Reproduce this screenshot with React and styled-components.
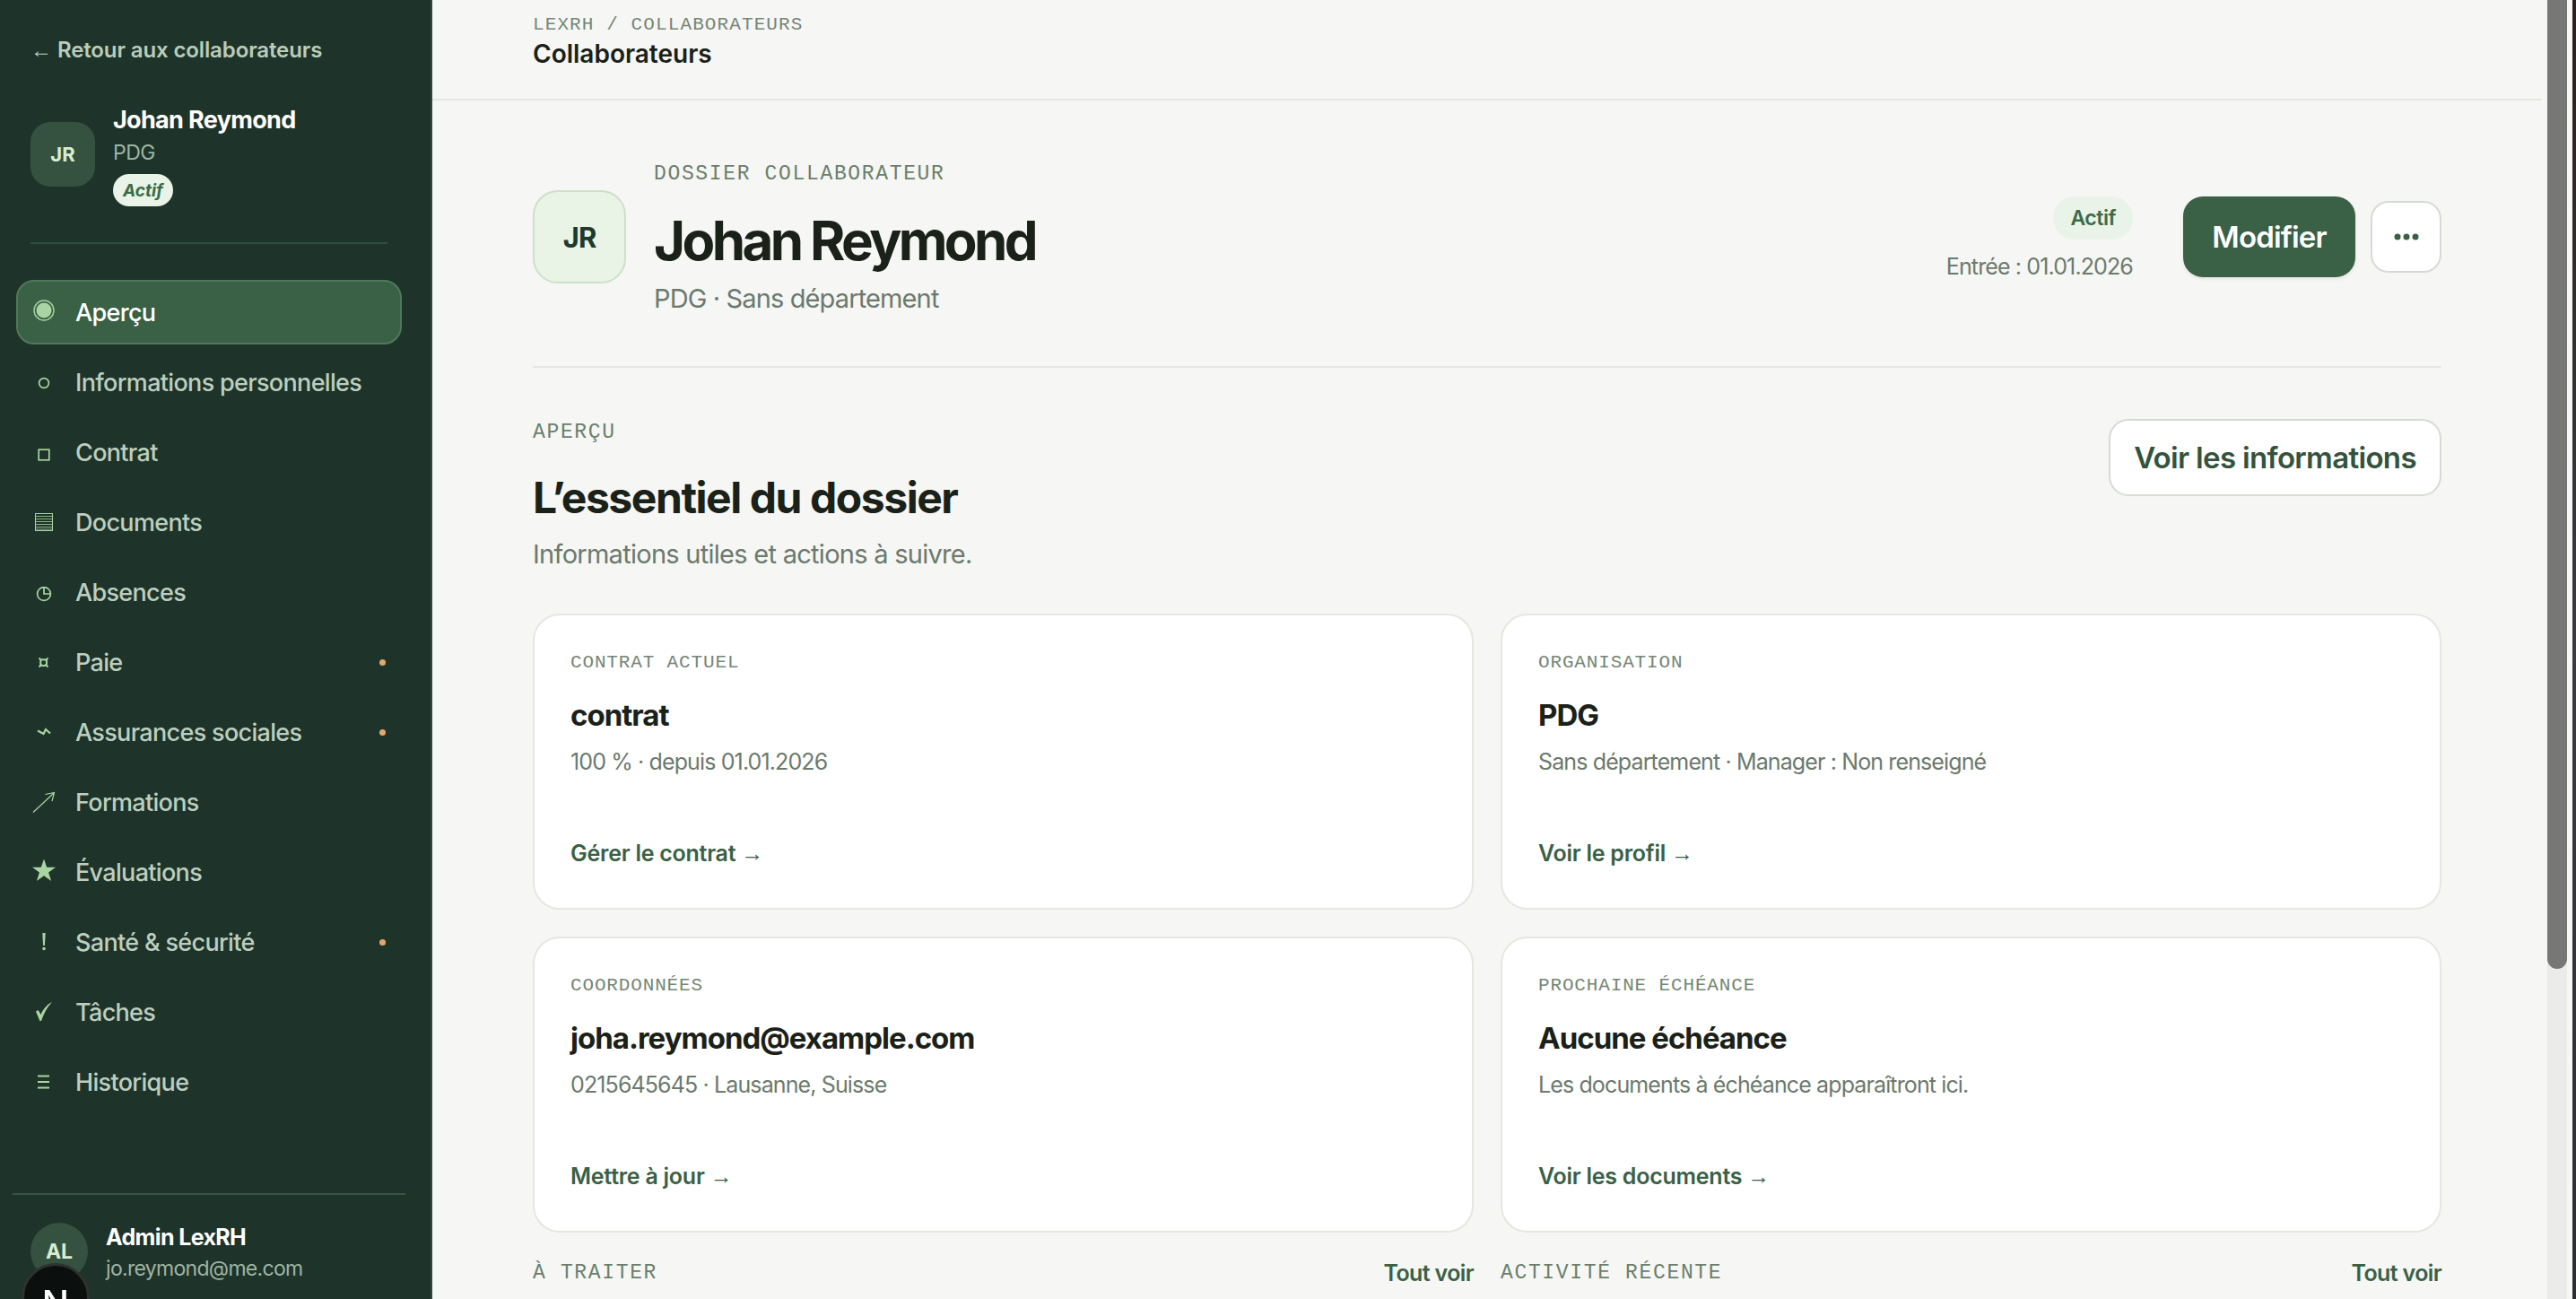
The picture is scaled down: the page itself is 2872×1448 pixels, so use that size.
import React from 'react'
import styled, { createGlobalStyle } from 'styled-components'

const SANS = '"Inter", "Noto Sans", sans-serif'
const MONO = '"Liberation Mono", "DejaVu Sans Mono", monospace'

const ICON = '#a8d5a2'

const GlobalStyle = createGlobalStyle`
  * {
    box-sizing: border-box;
  }
  html,
  body {
    margin: 0;
    height: 100%;
    overflow: hidden;
    background: #f6f6f4;
    font-family: ${SANS};
  }
`

const icons = {
  dot: (
    <>
      <circle cx="16" cy="14" r="11" fill="none" stroke={ICON} strokeWidth="1.4" />
      <circle cx="16" cy="14" r="8.5" fill={ICON} />
    </>
  ),
  circle: <circle cx="16" cy="17" r="5.4" fill="none" stroke={ICON} strokeWidth="1.7" />,
  square: <rect x="10.2" y="13.2" width="11.6" height="11.6" fill="none" stroke={ICON} strokeWidth="1.7" />,
  lines: (
    <>
      <rect x="6.5" y="6.5" width="19" height="19" fill="none" stroke={ICON} strokeWidth="1" />
      <path d="M6 9.500h20M6 12.500h20M6 15.500h20M6 18.500h20M6 21.500h20M6 24h20" stroke={ICON} strokeWidth="1.200" opacity="0.8" />
    </>
  ),
  clock: (
    <>
      <circle cx="16" cy="18" r="7.4" fill="none" stroke={ICON} strokeWidth="1.7" />
      <path d="M16 11v7h7.4" fill="none" stroke={ICON} strokeWidth="1.7" />
    </>
  ),
  currency: (
    <>
      <rect x="12.2" y="13.2" width="6.8" height="6.8" rx="2.4" fill="none" stroke={ICON} strokeWidth="2" />
      <path d="M10.500 11.500l3 3M20.500 11.500l-3 3M10.500 21.500l3-3M20.500 21.500l-3-3" stroke={ICON} strokeWidth="2" />
    </>
  ),
  bolt: <path d="M9 14.500l6.500 3.500 2.500-5 5 4.500" fill="none" stroke={ICON} strokeWidth="2.200" />,
  arrow: <path d="M4 27.500L27 6M17.500 7.500L27.500 5.500L25 15" fill="none" stroke={ICON} strokeWidth="1.200" />,
  star: <path d="M16 1.500l3.200 9.300h9.800l-7.900 5.800 3 9.400-8.100-5.800-8.100 5.800 3-9.400-7.900-5.800h9.800z" fill={ICON} />,
  alert: (
    <>
      <path d="M14.300 6h3.400l-.8 14h-1.800z" fill={ICON} />
      <circle cx="16" cy="23.500" r="1.800" fill={ICON} />
    </>
  ),
  check: <path d="M7 15.500l2.600-1.600 3 5.200C15 13 19 8 25 5c-5 5-9 12-12 21h-1.600z" fill={ICON} />,
  menu: <path d="M9 9.500h13M9 16h13M9 22.500h13" stroke={ICON} strokeWidth="2" />,
}

const navItems = [
  { label: 'Aperçu', icon: 'dot', active: true },
  { label: 'Informations personnelles', icon: 'circle' },
  { label: 'Contrat', icon: 'square' },
  { label: 'Documents', icon: 'lines' },
  { label: 'Absences', icon: 'clock' },
  { label: 'Paie', icon: 'currency', alert: true },
  { label: 'Assurances sociales', icon: 'bolt', alert: true },
  { label: 'Formations', icon: 'arrow' },
  { label: 'Évaluations', icon: 'star' },
  { label: 'Santé & sécurité', icon: 'alert', alert: true },
  { label: 'Tâches', icon: 'check' },
  { label: 'Historique', icon: 'menu' },
]

const cards = [
  { label: 'CONTRAT ACTUEL', title: 'contrat', text: '100 % · depuis 01.01.2026', link: 'Gérer le contrat' },
  { label: 'ORGANISATION', title: 'PDG', text: 'Sans département · Manager : Non renseigné', link: 'Voir le profil' },
  { label: 'COORDONNÉES', title: 'joha.reymond@example.com', text: '0215645645 · Lausanne, Suisse', link: 'Mettre à jour' },
  {
    label: 'PROCHAINE ÉCHÉANCE',
    title: 'Aucune échéance',
    text: 'Les documents à échéance apparaîtront ici.',
    link: 'Voir les documents',
  },
]

const App = () => {
  return (
    <Page>
      <GlobalStyle />
      <Sidebar>
        <BackLink>
          <Arrow>←</Arrow> Retour aux collaborateurs
        </BackLink>
        <Profile>
          <ProfileAvatar>JR</ProfileAvatar>
          <div>
            <ProfileName>Johan Reymond</ProfileName>
            <ProfileRole>PDG</ProfileRole>
            <ProfileBadge>Actif</ProfileBadge>
          </div>
        </Profile>
        <Nav>
          {navItems.map((item) => (
            <NavItem key={item.label} $active={item.active}>
              <IconSlot viewBox="0 0 32 32">{icons[item.icon]}</IconSlot>
              {item.label}
              {item.alert && <AlertDot />}
            </NavItem>
          ))}
        </Nav>
        <UserBox>
          <UserAvatar>AL</UserAvatar>
          <div>
            <UserName>Admin LexRH</UserName>
            <UserMail>jo.reymond@me.com</UserMail>
          </div>
        </UserBox>
      </Sidebar>

      <Main>
        <TopBar>
          <Crumbs>LEXRH / COLLABORATEURS</Crumbs>
          <TopTitle>Collaborateurs</TopTitle>
        </TopBar>
        <Content>
          <Hero>
            <HeroAvatar>JR</HeroAvatar>
            <HeroText>
              <Eyebrow>DOSSIER COLLABORATEUR</Eyebrow>
              <HeroName>Johan Reymond</HeroName>
              <HeroSub>PDG · Sans département</HeroSub>
            </HeroText>
            <HeroStatus>
              <StatusBadge>Actif</StatusBadge>
              <EntryDate>Entrée : 01.01.2026</EntryDate>
            </HeroStatus>
            <PrimaryButton>Modifier</PrimaryButton>
            <MoreButton>
              <svg width="30" height="8" viewBox="0 0 30 8">
                <circle cx="5" cy="4" r="3.500" fill="#3a6045" />
                <circle cx="15" cy="4" r="3.500" fill="#3a6045" />
                <circle cx="25" cy="4" r="3.500" fill="#3a6045" />
              </svg>
            </MoreButton>
          </Hero>

          <SectionHead>
            <div>
              <Eyebrow>APERÇU</Eyebrow>
              <SectionTitle>L’essentiel du dossier</SectionTitle>
              <SectionSub>Informations utiles et actions à suivre.</SectionSub>
            </div>
            <OutlineButton>Voir les informations</OutlineButton>
          </SectionHead>

          <CardGrid>
            {cards.map((card) => (
              <Card key={card.label}>
                <CardLabel>{card.label}</CardLabel>
                <CardTitle>{card.title}</CardTitle>
                <CardText>{card.text}</CardText>
                <CardLink>
                  {card.link} <Arrow>→</Arrow>
                </CardLink>
              </Card>
            ))}
          </CardGrid>

          <Columns>
            <ColumnHead>
              <Eyebrow>À TRAITER</Eyebrow>
              <SeeAll>Tout voir</SeeAll>
            </ColumnHead>
            <ColumnHead>
              <Eyebrow>ACTIVITÉ RÉCENTE</Eyebrow>
              <SeeAll>Tout voir</SeeAll>
            </ColumnHead>
          </Columns>
        </Content>
      </Main>

      <ScrollTrack>
        <ScrollThumb />
      </ScrollTrack>
      <WindowGap />
      <DesktopEdge />
      <DevBadge>N</DevBadge>
    </Page>
  )
}

const Page = styled.div`
  display: flex;
  width: 2872px;
  height: 1448px;
  overflow: hidden;
  background: #f6f6f4;
  color: #1a2119;
`

const Arrow = styled.span`
  font-family: "Liberation Sans", sans-serif;
  font-weight: 400;
  letter-spacing: 0;
`

const Sidebar = styled.aside`
  flex: 0 0 482px;
  display: flex;
  flex-direction: column;
  height: 1448px;
  overflow: hidden;
  background: #1e3329;
  border-right: 2px solid #2c4a3a;
`

const BackLink = styled.div`
  margin: 38px 0 0 34px;
  font-size: 24px;
  line-height: 36px;
  font-weight: 600;
  letter-spacing: -0.005em;
  color: #b9cdbb;
`

const Profile = styled.div`
  display: flex;
  align-items: center;
  gap: 20px;
  width: 398px;
  margin: 40px 0 0 34px;
  padding-bottom: 40px;
  border-bottom: 2px solid #2f4f3c;
`

const ProfileAvatar = styled.div`
  display: flex;
  align-items: center;
  justify-content: center;
  width: 72px;
  height: 72px;
  border-radius: 22px;
  background: #34523f;
  color: #d8ecd3;
  font-size: 22px;
  font-weight: 700;
`

const ProfileName = styled.div`
  margin-top: 2px;
  font-size: 27px;
  line-height: 36px;
  font-weight: 700;
  letter-spacing: -0.025em;
  color: #fff;
`

const ProfileRole = styled.div`
  margin-top: 2px;
  font-size: 23px;
  line-height: 32px;
  letter-spacing: -0.02em;
  color: #9fb5a3;
`

const ProfileBadge = styled.div`
  display: inline-flex;
  align-items: center;
  height: 36px;
  margin-top: 8px;
  padding: 0 11px;
  border-radius: 18px;
  background: #e9f3e8;
  color: #3a6b47;
  font-size: 19px;
  font-weight: 700;
  font-style: italic;
`

const Nav = styled.nav`
  display: flex;
  flex-direction: column;
  gap: 6px;
  width: 430px;
  margin: 40px 0 0 18px;
`

const NavItem = styled.div`
  display: flex;
  align-items: center;
  height: 72px;
  border-radius: 20px;
  border: 2px solid ${(p) => (p.$active ? '#4e7a5a' : 'transparent')};
  background: ${(p) => (p.$active ? '#3a6045' : 'transparent')};
  color: ${(p) => (p.$active ? '#fff' : '#bccfbf')};
  font-size: 27px;
  font-weight: 500;
  letter-spacing: -0.025em;
`

const IconSlot = styled.svg`
  flex: 0 0 32px;
  width: 32px;
  height: 32px;
  margin: 0 19px 0 13px;
`

const AlertDot = styled.span`
  width: 7px;
  height: 7px;
  margin: 0 16px 0 auto;
  border-radius: 50%;
  background: #e5a868;
`

const UserBox = styled.div`
  display: flex;
  gap: 20px;
  height: 118px;
  margin: auto 28px 0 14px;
  padding: 31px 20px 0;
  border-top: 2px solid #35563f;
`

const UserAvatar = styled.div`
  flex: 0 0 64px;
  display: flex;
  align-items: center;
  justify-content: center;
  height: 64px;
  border-radius: 50%;
  background: #34523f;
  color: #d8ecd3;
  font-size: 23px;
  font-weight: 700;
`

const UserName = styled.div`
  font-size: 25px;
  line-height: 32px;
  font-weight: 700;
  letter-spacing: -0.025em;
  color: #fff;
`

const UserMail = styled.div`
  margin-top: 3px;
  font-size: 23px;
  line-height: 32px;
  letter-spacing: -0.03em;
  color: #9fb5a3;
`

const Main = styled.main`
  flex: 1;
  min-width: 0;
  height: 1448px;
  overflow: hidden;
`

const TopBar = styled.header`
  height: 112px;
  margin-right: 6px;
  padding: 16px 0 0 112px;
  border-bottom: 2px solid #e6e7df;
`

const Crumbs = styled.div`
  font-family: ${MONO};
  font-size: 21px;
  line-height: 24px;
  letter-spacing: 1.1px;
  color: #758676;
`

const TopTitle = styled.div`
  margin-top: 2px;
  font-size: 28px;
  line-height: 36px;
  font-weight: 600;
`

const Content = styled.div`
  padding: 0 118px 0 112px;
`

const Hero = styled.section`
  display: flex;
  align-items: center;
  padding: 65px 0 57px;
  border-bottom: 2px solid #e6e7df;
`

const HeroAvatar = styled.div`
  flex: 0 0 104px;
  display: flex;
  align-items: center;
  justify-content: center;
  height: 104px;
  margin-right: 31px;
  border-radius: 28px;
  border: 2px solid #cde0c8;
  background: #e9f3e6;
  color: #1f3a2c;
  font-size: 31px;
  font-weight: 700;
  letter-spacing: -0.03em;
`

const HeroText = styled.div`
  flex: 1;
  padding-top: 3px;
`

const Eyebrow = styled.div`
  font-family: ${MONO};
  font-size: 23px;
  line-height: 28px;
  letter-spacing: 1.65px;
  color: #6a7f6c;
`

const HeroName = styled.h1`
  margin: 23px 0 0;
  font-size: 60px;
  line-height: 74px;
  font-weight: 700;
  letter-spacing: -0.06em;
  color: #1a2119;
`

const HeroSub = styled.div`
  margin-top: 10px;
  font-size: 29px;
  line-height: 36px;
  letter-spacing: -0.03em;
  color: #6b7a6d;
`

const HeroStatus = styled.div`
  display: flex;
  flex-direction: column;
  align-items: flex-end;
  gap: 12px;
  margin: 6px 56px 0 0;
`

const StatusBadge = styled.div`
  display: flex;
  align-items: center;
  height: 48px;
  padding: 0 19px;
  border-radius: 24px;
  background: #e9f3e8;
  color: #3a6b47;
  font-size: 23px;
  font-weight: 600;
  letter-spacing: -0.02em;
`

const EntryDate = styled.div`
  font-size: 25px;
  line-height: 36px;
  letter-spacing: -0.035em;
  color: #6b7a6d;
`

const PrimaryButton = styled.button`
  width: 192px;
  height: 90px;
  padding: 0;
  border: 0;
  border-radius: 22px;
  background: #3a6045;
  box-shadow: 0 2px 4px rgba(0, 0, 0, 0.08);
  color: #fff;
  font-family: ${SANS};
  font-size: 33px;
  font-weight: 600;
  letter-spacing: -0.025em;
`

const MoreButton = styled.button`
  display: flex;
  align-items: center;
  justify-content: center;
  width: 79px;
  height: 80px;
  margin-left: 17px;
  padding: 0;
  border: 2px solid #d5dbd4;
  border-radius: 20px;
  background: #fff;
`

const SectionHead = styled.section`
  display: flex;
  align-items: flex-start;
  justify-content: space-between;
  padding-top: 58px;
`

const SectionTitle = styled.h2`
  margin: 27px 0 0;
  font-size: 48px;
  line-height: 64px;
  font-weight: 700;
  letter-spacing: -0.03em;
`

const SectionSub = styled.div`
  margin-top: 13px;
  font-size: 29px;
  line-height: 36px;
  letter-spacing: -0.025em;
  color: #6b7a6d;
`

const OutlineButton = styled.button`
  width: 371px;
  height: 86px;
  margin-top: -1px;
  padding: 0;
  border: 2px solid #d5dbd4;
  border-radius: 22px;
  background: #fff;
  color: #33533d;
  font-family: ${SANS};
  font-size: 33px;
  font-weight: 600;
  letter-spacing: -0.02em;
`

const CardGrid = styled.div`
  display: grid;
  grid-template-columns: 1fr 1fr;
  grid-auto-rows: 330px;
  gap: 30px;
  margin-top: 48px;
`

const Card = styled.article`
  display: flex;
  flex-direction: column;
  padding: 41px 40px 45px;
  border: 2px solid #e6e7df;
  border-radius: 30px;
  background: #fff;
`

const CardLabel = styled.div`
  font-family: ${MONO};
  font-size: 21px;
  line-height: 24px;
  letter-spacing: 0.85px;
  color: #758676;
`

const CardTitle = styled.div`
  margin-top: 26px;
  font-size: 33px;
  line-height: 40px;
  font-weight: 700;
  letter-spacing: -0.03em;
`

const CardText = styled.div`
  margin-top: 16px;
  font-size: 25px;
  line-height: 32px;
  letter-spacing: -0.035em;
  color: #6b7a6d;
`

const CardLink = styled.div`
  margin-top: auto;
  font-size: 25px;
  line-height: 32px;
  font-weight: 600;
  letter-spacing: -0.01em;
  color: #3a6045;
`

const Columns = styled.div`
  display: grid;
  grid-template-columns: 1fr 1fr;
  gap: 30px;
  margin-top: 29px;
`

const ColumnHead = styled.div`
  display: flex;
  justify-content: space-between;
  align-items: center;
`

const SeeAll = styled.div`
  font-size: 25px;
  line-height: 32px;
  font-weight: 600;
  letter-spacing: -0.025em;
  color: #3a6045;
`

const ScrollTrack = styled.div`
  flex: 0 0 22px;
  height: 1448px;
  background: #ebebe9;
`

const ScrollThumb = styled.div`
  height: 1080px;
  border-radius: 0 0 11px 11px;
  background: #777775;
`

const WindowGap = styled.div`
  flex: 0 0 6px;
  background: #f6f6f4;
`

const DesktopEdge = styled.div`
  flex: 0 0 4px;
  background: linear-gradient(#2a211c, #3a3a42 50%, #2c2c34);
`

const DevBadge = styled.div`
  position: fixed;
  left: 24px;
  top: 1408px;
  display: flex;
  justify-content: center;
  width: 76px;
  height: 76px;
  padding-top: 17px;
  border-radius: 50%;
  border: 3px solid #2f3230;
  background: #0b0f0d;
  color: #fff;
  font-size: 40px;
  font-weight: 500;
`

export default App
